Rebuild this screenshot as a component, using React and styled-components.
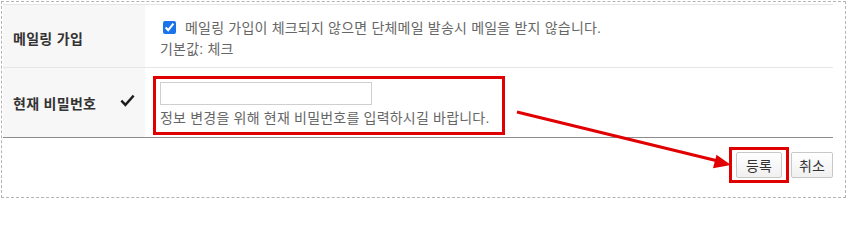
import React from 'react'
import styled, { createGlobalStyle } from 'styled-components'

const GlobalStyle = createGlobalStyle`
  body {
    margin: 0;
    background: #fff;
    font-family: "Liberation Sans", "Noto Sans CJK KR", sans-serif;
  }
`

const Page = styled.div`
  position: relative;
  width: 848px;
  height: 200px;
  padding: 1px 0 0 1px;
  box-sizing: border-box;
  overflow: hidden;
`

const Frame = styled.div`
  width: 845px;
  height: 197px;
  box-sizing: border-box;
  border: 1px dashed #b4b4b4;
  padding: 2px 12px 0 1px;
`

const Table = styled.div`
  display: grid;
  grid-template-columns: 142px 1fr;
  border-top: 1px solid #e6e6e6;
  border-bottom: 1px solid #8c8c8c;
`

const Label = styled.div`
  display: flex;
  align-items: center;
  justify-content: space-between;
  background: #f7f7f7;
  padding: ${p => p.$top || 0}px 10px 0 10px;
  font-size: 14px;
  letter-spacing: 0.3px;
  font-weight: bold;
  color: #333;
  border-bottom: ${p => (p.$last ? 'none' : '1px solid #e6e6e6')};
`

const Cell = styled.div`
  padding: ${p => p.$pad};
  border-bottom: ${p => (p.$last ? 'none' : '1px solid #e6e6e6')};
  font-size: 14px;
  letter-spacing: 0.2px;
  color: #666;
`

const Line = styled.div`
  display: flex;
  align-items: center;
  height: ${p => p.$h}px;
`

const Check = styled.input`
  width: 13px;
  height: 13px;
  margin: 0 9px 0 3px;
  accent-color: #1a73e8;
`

const Mark = styled.svg`
  display: block;
  margin-top: -4px;
`

const Highlight = styled.div`
  display: ${p => (p.$inline ? 'inline-flex' : 'block')};
  border: 3px solid #e00000;
  padding: ${p => p.$pad};
  width: ${p => (p.$w ? `${p.$w}px` : 'auto')};
  box-sizing: border-box;
`

const TextInput = styled.input`
  display: block;
  width: 212px;
  height: 23px;
  box-sizing: border-box;
  margin: 0;
  border: 1px solid #cfcfcf;
  background: #fff;
`

const Help = styled.div`
  height: 26px;
  line-height: 26px;
  color: #666;
`

const Footer = styled.div`
  display: flex;
  justify-content: flex-end;
  align-items: center;
  gap: 2px;
  padding-top: 9px;
`

const Button = styled.button`
  height: 26px;
  width: ${p => p.$w}px;
  padding: 0;
  border: 1px solid #c8c8c8;
  border-radius: 2px;
  background: linear-gradient(#ffffff, #f0f0f0);
  font-family: "Liberation Sans", "Noto Sans CJK KR", sans-serif;
  font-size: 14px;
  color: #333;
`

const Overlay = styled.svg`
  position: absolute;
  left: 0;
  top: 0;
  pointer-events: none;
`

export default function App() {
  return (
    <Page>
      <GlobalStyle />
      <Frame>
        <Table>
          <Label $top={4}>메일링 가입</Label>
          <Cell $pad="11px 0 9px 15px">
            <Line $h={22}>
              <Check type="checkbox" defaultChecked />
              메일링 가입이 체크되지 않으면 단체메일 발송시 메일을 받지 않습니다.
            </Line>
            <Line $h={20}>기본값: 체크</Line>
          </Cell>
          <Label $last>
            현재 비밀번호
            <Mark width="15" height="14" viewBox="0 0 15 14">
              <path d="M0.5 7.5 L2.2 5.8 L5.4 9 L12.8 0.8 L14.5 2.4 L5.4 12.8 Z" fill="#1e1e1e" />
            </Mark>
          </Label>
          <Cell $last $pad="8px 0 2px 8px">
            <Highlight $w={352} $pad="3px 4px 1px 4px">
              <TextInput type="password" />
              <Help>정보 변경을 위해 현재 비밀번호를 입력하시길 바랍니다.</Help>
            </Highlight>
          </Cell>
        </Table>
        <Footer>
          <Highlight $inline $pad="2px 4px">
            <Button $w={46}>등록</Button>
          </Highlight>
          <Button $w={42}>취소</Button>
        </Footer>
      </Frame>
      <Overlay width="848" height="200">
        <line x1="517" y1="112" x2="718" y2="161" stroke="#e00000" strokeWidth="3" />
        <polygon points="731,165 716.5,154.8 713,168.2" fill="#e00000" />
      </Overlay>
    </Page>
  )
}
